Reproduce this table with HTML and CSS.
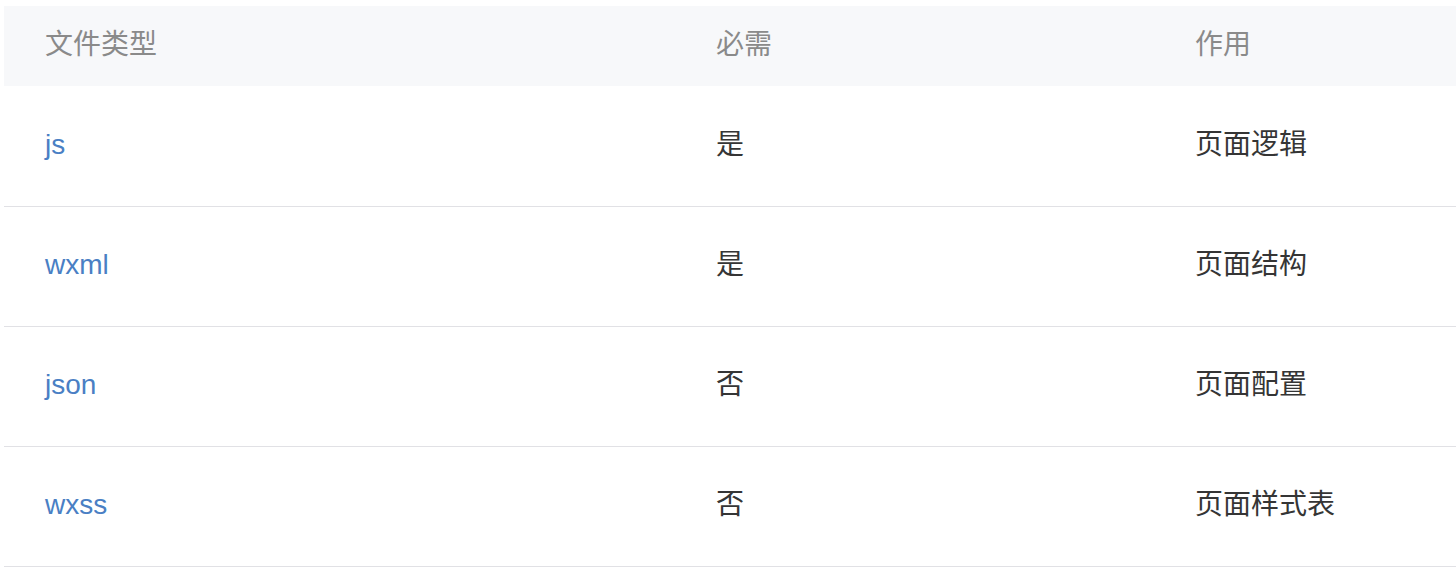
FILE: index.html
```html
<!DOCTYPE html>
<html lang="zh">
<head>
<meta charset="utf-8">
<link rel="stylesheet" href="styles.css">
</head>
<body>
<div class="table">
  <div class="row head">
    <div class="cell">文件类型</div>
    <div class="cell">必需</div>
    <div class="cell">作用</div>
  </div>
  <div class="row">
    <div class="cell link">js</div>
    <div class="cell">是</div>
    <div class="cell">页面逻辑</div>
  </div>
  <div class="row">
    <div class="cell link">wxml</div>
    <div class="cell">是</div>
    <div class="cell">页面结构</div>
  </div>
  <div class="row">
    <div class="cell link">json</div>
    <div class="cell">否</div>
    <div class="cell">页面配置</div>
  </div>
  <div class="row">
    <div class="cell link">wxss</div>
    <div class="cell">否</div>
    <div class="cell">页面样式表</div>
  </div>
</div>
</body>
</html>
```
FILE: styles.css
```css
html, body {
  margin: 0;
  padding: 0;
  background: #ffffff;
}
body {
  font-family: "Liberation Sans", "Noto Sans CJK SC", sans-serif;
  font-size: 28px;
  color: #353535;
}
.table {
  margin: 6px 0 0 4px;
}
.row {
  display: grid;
  grid-template-columns: 671px 479px 1fr;
  height: 116px;
  padding-bottom: 3px;
  align-items: center;
  border-bottom: 1px solid #e1e1e5;
}
.row.head {
  height: 78px;
  padding-bottom: 2px;
  background: #f7f8fa;
  background-clip: padding-box;
  border-bottom: 1px solid transparent;
  color: #8a8a8a;
}
.cell {
  padding-left: 41px;
  line-height: 1;
}
.link {
  color: #4a7fc4;
}
```
